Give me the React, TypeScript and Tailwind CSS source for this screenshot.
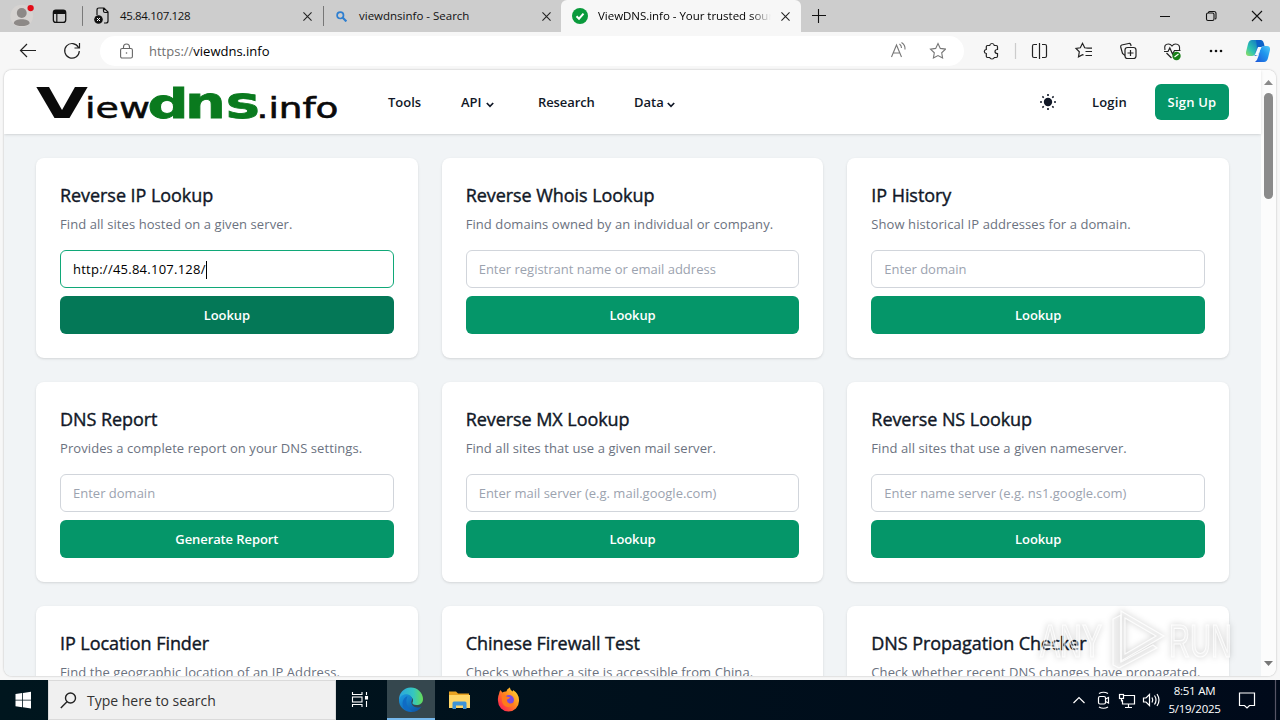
import React from "react";

type CardProps = {
  title: string;
  desc: string;
  placeholder?: string;
  value?: string;
  button?: string;
};

const cards: CardProps[] = [
  { title: "Reverse IP Lookup", desc: "Find all sites hosted on a given server.", value: "http://45.84.107.128/", button: "Lookup" },
  { title: "Reverse Whois Lookup", desc: "Find domains owned by an individual or company.", placeholder: "Enter registrant name or email address", button: "Lookup" },
  { title: "IP History", desc: "Show historical IP addresses for a domain.", placeholder: "Enter domain", button: "Lookup" },
  { title: "DNS Report", desc: "Provides a complete report on your DNS settings.", placeholder: "Enter domain", button: "Generate Report" },
  { title: "Reverse MX Lookup", desc: "Find all sites that use a given mail server.", placeholder: "Enter mail server (e.g. mail.google.com)", button: "Lookup" },
  { title: "Reverse NS Lookup", desc: "Find all sites that use a given nameserver.", placeholder: "Enter name server (e.g. ns1.google.com)", button: "Lookup" },
  { title: "IP Location Finder", desc: "Find the geographic location of an IP Address." },
  { title: "Chinese Firewall Test", desc: "Checks whether a site is accessible from China." },
  { title: "DNS Propagation Checker", desc: "Check whether recent DNS changes have propagated." },
];

function Card({ title, desc, placeholder, value, button }: CardProps) {
  const active = value !== undefined;
  return (
    <section className="h-[200px] rounded-lg bg-white px-6 pt-[23px] pb-6 shadow-sm">
      <h2 className="whitespace-nowrap text-[18px] leading-7 tracking-[-0.06px] text-[#111827] [-webkit-text-stroke:0.4px_#111827]">{title}</h2>
      <p className="mt-[5px] whitespace-nowrap text-[13px] leading-5 tracking-[0.08px] text-[#6b7280]">{desc}</p>
      {button && (
        <>
          <div
            className={
              active
                ? "mt-4 flex h-[38px] items-center rounded-md border border-[#10a878] px-3 pt-[2px] text-[13px] tracking-[0.25px] text-black"
                : "mt-4 flex h-[38px] items-center rounded-md border border-[#d1d5db] px-3 pt-[2px] text-[13px] text-[#9ca3af]"
            }
          >
            {active ? value : placeholder}
            {active && <span className="h-[18px] w-px bg-black" />}
          </div>
          <button
            className={
              active
                ? "mt-2 flex h-[38px] w-full items-center justify-center rounded-md bg-[#047857] pt-[2px] text-[13px] font-semibold tracking-[-0.1px] text-white"
                : "mt-2 flex h-[38px] w-full items-center justify-center rounded-md bg-[#059669] pt-[2px] text-[13px] font-semibold tracking-[-0.1px] text-white"
            }
          >
            {button}
          </button>
        </>
      )}
    </section>
  );
}

function CloseX({ size = 9 }: { size?: number }) {
  return (
    <svg width={size} height={size} viewBox="0 0 10 10" stroke="#222" strokeWidth="1.2" fill="none">
      <path d="M.5.5l9 9M9.5.5l-9 9" />
    </svg>
  );
}

function TabBar() {
  return (
    <div className="flex h-8 shrink-0 items-stretch bg-[#cdcdcd] text-[11.5px] text-[#111]">
      <div className="flex w-[84px] items-center border-r border-transparent">
        <svg width="84" height="32" viewBox="0 0 84 32">
          <circle cx="22" cy="16" r="11.5" fill="#d6d3d1" />
          <circle cx="22" cy="13" r="5" fill="#8d8987" />
          <path d="M14 23.500c0-5.500 16-5.500 16 0-3 3.500-13 3.500-16 0z" fill="#8d8987" />
          <circle cx="31" cy="8" r="3.2" fill="#e30b17" />
          <rect x="54" y="10" width="12.5" height="12.5" rx="2.5" fill="none" stroke="#111" strokeWidth="1.3" />
          <path d="M54 14v-1.500q0-2.500 2.500-2.500h7.500q2.500 0 2.500 2.500V14z" fill="#111" />
          <path d="M57.500 13v9" stroke="#111" strokeWidth="1.200" />
          <path d="M83.500 6v20" stroke="#777" />
        </svg>
      </div>
      <div className="flex w-[239px] items-center pl-[10px] pr-[11px]">
        <svg width="16" height="18" viewBox="0 0 16 18" fill="none" stroke="#111" strokeWidth="1.2">
          <path d="M3 8V3q0-2 2-2h5l4 4v9q0 2-2 2h-2M9.500 1v3q0 1.500 1.500 1.500h3" />
          <circle cx="4.500" cy="12.500" r="4.300" fill="#111" stroke="none" />
          <path d="M3 11l3 3M6 11l-3 3" stroke="#fff" strokeWidth="1" />
        </svg>
        <span className="ml-[10px] flex-1 tracking-[-0.35px]">45.84.107.128</span>
        <CloseX />
      </div>
      <div className="flex w-[238px] items-center pr-[10px]">
        <span className="h-5 w-px bg-[#777]" />
        <svg className="ml-[12px]" width="11" height="11" viewBox="0 0 11 11" fill="none" stroke="#2f7fd0">
          <circle cx="4.300" cy="4.300" r="3.200" strokeWidth="1.700" />
          <path d="M6.800 6.800l3.600 3.600" strokeWidth="2.200" />
        </svg>
        <span className="ml-[12px] flex-1">viewdnsinfo - Search</span>
        <CloseX />
      </div>
      <div className="flex w-[240px] items-center rounded-t-md bg-[#f7f7f7] pl-[11px] pr-[11px]">
        <svg width="16" height="16" viewBox="0 0 16 16">
          <circle cx="8" cy="8" r="8" fill="#0a9a3c" />
          <path d="M4.500 8.300l2.500 2.400 4.500-5" fill="none" stroke="#fff" strokeWidth="2" />
        </svg>
        <span className="ml-[10px] w-[173px] overflow-hidden whitespace-nowrap bg-gradient-to-r from-black from-88% to-transparent bg-clip-text tracking-[-0.03px] text-transparent">
          ViewDNS.info - Your trusted source
        </span>
        <span className="ml-auto">
          <CloseX />
        </span>
      </div>
      <svg width="479" height="32" viewBox="801 0 479 32" fill="none" stroke="#111" strokeWidth="1.100">
        <path d="M812 15.500h14M818.500 9v14M1160 16.500h10" />
        <rect x="1206.500" y="13" width="7.500" height="7.500" rx="1.500" />
        <path d="M1208.500 13v-.5q0-1 1-1h4.500q2 0 2 2v4.500q0 1-1 1" />
        <path d="M1252 11l10 10M1262 11l-10 10" />
      </svg>
    </div>
  );
}

function Toolbar() {
  return (
    <div className="flex h-[38px] shrink-0 items-center bg-[#f7f7f7]">
      <svg width="100" height="38" viewBox="0 32 100 38" fill="none" stroke="#222" strokeWidth="1.200">
        <path d="M36 50.500H20.500M27 44l-6.500 6.500L27 57" />
        <path d="M78.500 47.500A7.300 7.300 0 1 0 79.300 51M79.500 43v5h-5" />
      </svg>
      <div className="flex h-[30px] w-[864px] items-center rounded-full bg-white pl-[20px] pr-[18px]">
        <svg width="13" height="16" viewBox="0 0 13 16" fill="none" stroke="#666" strokeWidth="1.100">
          <rect x=".6" y="5.500" width="11.800" height="9.500" rx="1.500" />
          <path d="M3.500 5.500V4a3 3 0 0 1 6 0v1.500" />
          <circle cx="6.500" cy="10" r=".8" fill="#666" stroke="none" />
        </svg>
        <span className="ml-[16px] flex-1 pt-px text-[13px] text-[#707070]">
          https://<span className="text-black">viewdns.info</span>
        </span>
        <svg width="56" height="20" viewBox="890 41 56 20" fill="none" stroke="#777" strokeWidth="1.100">
          <path d="M891.500 57l5-12 5 12M893 53h7M899.500 44q2 1.500 2 4M901.500 42.500q4 2.500 3.500 7" />
          <path d="M938 43.500l2.300 4.900 5.200.7-3.800 3.700.9 5.300-4.600-2.500-4.600 2.500.9-5.300-3.800-3.700 5.200-.7z" />
        </svg>
      </div>
      <svg width="316" height="38" viewBox="964 32 316 38" fill="none" stroke="#222" strokeWidth="1.200">
        <defs>
          <linearGradient id="cpA" x1="0" y1="1" x2="1" y2="0">
            <stop offset="0" stopColor="#9be05a" />
            <stop offset=".35" stopColor="#2fc6b0" />
            <stop offset="1" stopColor="#0a63c9" />
          </linearGradient>
          <linearGradient id="cpB" x1="0" y1="1" x2="1" y2="0">
            <stop offset="0" stopColor="#1d55d8" />
            <stop offset=".6" stopColor="#2098ee" />
            <stop offset="1" stopColor="#55ccf8" />
          </linearGradient>
        </defs>
        <path d="M987.500 45.500h2.200q.3-2 2.300-2t2.300 2h2q1.200 0 1.200 1.200v2.800q-2.500 0-2.500 2t2.500 2v2.800q0 1.200-1.200 1.200h-2q-.3 1.500-2.300 1.500t-2.300-1.500h-2.200q-1.200 0-1.200-1.200v-2.800q-2-.2-2-2t2-2v-2.800q0-1.200 1.200-1.200z" />
        <path d="M1015.500 43v16" stroke="#ccc" />
        <path d="M1037 44.500h-3q-1.500 0-1.500 1.500v10q0 1.500 1.500 1.500h3M1042 44.500h3q1.500 0 1.500 1.500v10q0 1.500-1.500 1.500h-3M1039.500 43v16" />
        <path d="M1088 48.200l-3.300-.4-2.200-4.500-2.200 4.500-4.300.7 3.300 3.300-.8 5 4-2.200 1 .5M1085.500 51.500h6.500M1085.500 55.500h6.500M1087 48.200h5" />
        <path d="M1125 55.500l-2.500-2-1.800-6.500q-.3-1.500 1-2l7-1.500q1.500-.3 2 1l.4 1.500" />
        <rect x="1125" y="47.500" width="11" height="11" rx="2.500" />
        <path d="M1130.500 50v6M1127.500 53h6" />
        <path d="M1165 50q-1.500-6 3.500-6 2 0 3.500 2 1.500-2 3.500-2 5 0 4 6M1166.500 53l5 5M1164 51.500h4l1.800-3.500 2.700 6 2-3.500h6" />
        <circle cx="1176.500" cy="56" r="4.200" fill="#178017" stroke="none" />
        <path d="M1174.500 57l4-3" stroke="#fff" />
        <g fill="#111" stroke="none">
          <circle cx="1211" cy="51" r="1.300" />
          <circle cx="1216" cy="51" r="1.300" />
          <circle cx="1221" cy="51" r="1.300" />
        </g>
        <path d="M1252 40h9q-2.500 2-3.500 6l-1.800 7q-1 3-3.700 3h-3q-3.500 0-3-4l2-8q1-4 4-4z" fill="url(#cpA)" stroke="none" />
        <path d="M1264 62h-9q2.500-2 3.500-6l1.800-7q1-3 3.700-3h3q3.500 0 3 4l-2 8q-1 4-4 4z" fill="url(#cpB)" stroke="none" />
        <path d="M1256 40h5q2.500 0 3.500 6-4 0-5 4l-1.500 5-3.500 1 2.500-9z" fill="#0c62c8" stroke="none" />
        <path d="M1258 47h3.500l-3.500 8h-3.200z" fill="#f4fbff" stroke="none" />
      </svg>
    </div>
  );
}

function Logo() {
  return (
    <svg className="overflow-visible" width="302" height="36" viewBox="36 84 302 36" fontFamily="DejaVu Sans" fontWeight="400">
      <text x="36" y="118" fontSize="42" fontWeight="700" textLength="52" lengthAdjust="spacingAndGlyphs" fill="#0a0a0a">V</text>
      <text x="85" y="118" fontSize="29" textLength="65" lengthAdjust="spacingAndGlyphs" fill="#0a0a0a" stroke="#0a0a0a" strokeWidth=".5">iew</text>
      <text x="147.500" y="117.500" fontSize="41" fontWeight="700" textLength="41" lengthAdjust="spacingAndGlyphs" fill="#0a7a1e" stroke="#0a7a1e" strokeWidth=".8">d</text>
      <text x="185" y="117.500" fontSize="45" fontWeight="700" textLength="75" lengthAdjust="spacingAndGlyphs" fill="#0a7a1e" stroke="#0a7a1e" strokeWidth=".8">ns</text>
      <text x="256.500" y="118" fontSize="28" textLength="82" lengthAdjust="spacingAndGlyphs" fill="#0a0a0a" stroke="#0a0a0a" strokeWidth=".6">.info</text>
    </svg>
  );
}

function Chevron() {
  return (
    <svg className="mt-[3px]" width="8" height="6" viewBox="0 0 8 6" fill="none" stroke="#111827" strokeWidth="1.700">
      <path d="M.8 1l3.200 3.300L7.200 1" />
    </svg>
  );
}

function SiteHeader() {
  return (
    <header className="relative flex h-16 shrink-0 items-center bg-white px-8 text-[13px] font-semibold text-[#111827] shadow">
      <Logo />
      <nav className="ml-[50px] flex items-center pt-[2px]">
        <span className="w-[73px]">Tools</span>
        <span className="flex w-[77px] items-center gap-1">API <Chevron /></span>
        <span className="w-[96px] tracking-[-0.1px]">Research</span>
        <span className="flex items-center gap-[3px]">Data <Chevron /></span>
      </nav>
      <div className="ml-auto flex items-center">
        <svg width="18" height="18" viewBox="-9 -9 18 18" fill="#111827">
          <circle r="4.200" />
          <path d="M0-8v2M0 6v2M-8 0h2M6 0h2M-5.600-5.600l1.300 1.300M4.300 4.300l1.300 1.300M5.600-5.600L4.300-4.300M-5.600 5.600l1.300-1.300" stroke="#111827" strokeWidth="1.600" />
        </svg>
        <span className="ml-[35px] w-[63px] pt-[2px] tracking-[0.15px]">Login</span>
        <button className="h-9 w-[74px] rounded-md bg-[#059669] pt-[2px] font-semibold tracking-[0.2px] text-white">Sign Up</button>
      </div>
    </header>
  );
}

function Watermark() {
  return (
    <svg className="absolute left-[1030px] top-[602px] overflow-visible drop-shadow-[0_0_3px_rgba(0,0,0,0.3)]" width="212" height="80" viewBox="1030 602 212 80" fill="rgba(255,255,255,0.3)" stroke="rgba(255,255,255,0.85)" strokeWidth="1.200">
      <text x="1040" y="657" fontFamily="Liberation Sans" fontSize="46" textLength="62" lengthAdjust="spacingAndGlyphs">ANY</text>
      <path d="M1121 611l43 25-43 25zM1125 618v36l31-18z" fillRule="evenodd" />
      <path d="M1121 615l-8 4v46l6 3 38-20-4-3-32 17v-47z" />
      <text x="1169" y="657" fontFamily="Liberation Sans" fontSize="46" textLength="63" lengthAdjust="spacingAndGlyphs">RUN</text>
    </svg>
  );
}

function Taskbar() {
  return (
    <footer className="flex h-10 shrink-0 items-stretch bg-gradient-to-r from-[#00161e] to-[#000a1a] text-white">
      <svg width="48" height="40" viewBox="0 0 48 40" fill="#fff">
        <path d="M15.500 14l6.700-1v6.700h-6.700zM23 12.900l8-1.200v8h-8zM15.500 20.500h6.700v6.700l-6.700-1zM23 20.500h8v8l-8-1.200z" />
      </svg>
      <div className="flex w-[288px] items-center border border-[#dadada] bg-[#f0f0f0] pl-[11px]">
        <svg width="17" height="17" viewBox="0 0 17 17" fill="none" stroke="#222" strokeWidth="1.400">
          <circle cx="10.500" cy="6" r="5" />
          <path d="M7 9.700L.8 16" />
        </svg>
        <span className="ml-[10px] pt-px text-[14px] text-[#333]">Type here to search</span>
      </div>
      <svg width="196" height="40" viewBox="336 680 196 40">
        <defs>
          <linearGradient id="edA" x1="0" y1="0" x2="1" y2="0">
            <stop offset="0" stopColor="#2aa5e0" />
            <stop offset=".6" stopColor="#35c6c0" />
            <stop offset="1" stopColor="#66dc56" />
          </linearGradient>
          <linearGradient id="edB" x1="0" y1="0" x2="1" y2="1">
            <stop offset="0" stopColor="#1b9de2" />
            <stop offset="1" stopColor="#0c4da0" />
          </linearGradient>
          <linearGradient id="ffA" x1="1" y1="0" x2="0" y2="1">
            <stop offset="0" stopColor="#ffe83a" />
            <stop offset=".45" stopColor="#ff8a1e" />
            <stop offset=".8" stopColor="#ff3647" />
            <stop offset="1" stopColor="#e31587" />
          </linearGradient>
        </defs>
        <g fill="none" stroke="#fff" strokeWidth="1.100">
          <path d="M352.500 692v2.500h9.500V692M352.500 707v-2.500h9.500v2.500M366.500 692v3M366.500 701v6" />
          <rect x="352.500" y="697" width="9.500" height="5" />
          <rect x="365.500" y="696.500" width="2" height="2.500" fill="#fff" />
        </g>
        <rect x="387" y="680" width="48" height="40" fill="#35474e" />
        <rect x="387" y="718" width="48" height="2" fill="#76b9ed" />
        <path d="M399 700a12 12 0 0 1 24-1c0 4-3 6-6.500 6-3 0-4.500-1.200-4-2.500 1.600-2.500 0-6-4-6-4.500 0-8 1-9.500 3.500z" fill="url(#edA)" />
        <path d="M399 700c.5-4 5-6.500 9-5.500 3.500 1 4.500 4 4 5.500-2 3 1 7.500 5.500 7.500 2 0 3-.6 4-1-2.500 4-6.500 5.800-10.500 5.500-6.700-.3-12.300-5.500-12-12z" fill="url(#edB)" />
        <path d="M407.500 696q-4 8 4.500 16-10-1-9.500-9 .5-5 5-7z" fill="#0f6bc4" />
        <path d="M449 691.500h7l2 2h11v14h-20z" fill="#e8a221" />
        <path d="M449 695h21v13h-21z" fill="#ffd667" />
        <path d="M452.500 709v-6q0-1.500 1.500-1.500h11q1.500 0 1.500 1.500v6H463v-3.500h-7v3.500z" fill="#3e93d6" />
        <path d="M499 694q.3-2.500 1.500-4l1.800 2.500q2-1.200 4-1 .5-2.500 3.500-4 .3 2.500 3 4l.2-1.500q6.500 4 6 11a10.500 10.500 0 0 1-21 0q-.5-4 1-7z" fill="url(#ffA)" />
        <circle cx="509" cy="700" r="5" fill="#7a4be0" />
        <path d="M501.500 694q3 .5 5 2.500 2 .5 3.500.5-.5 2-3 2.500-.5 3 2.500 4 3.500.5 4.500-2.500 0 6.500-6.500 6-5-.8-5.500-6z" fill="#ff7a1c" />
      </svg>
      <div className="ml-auto flex items-center">
        <svg width="98" height="40" viewBox="1066 680 98 40" fill="none" stroke="#fff" strokeWidth="1.200">
          <path d="M1073.500 703l5.500-5.500 5.500 5.500" />
          <rect x="1098.500" y="696.500" width="7" height="7.500" rx="1.500" />
          <path d="M1105.500 699l3-1.500v5.500l-3-1.500M1099 693.500q4.500-2.500 9 0M1099 707q4.500 2.500 9 0" />
          <path d="M1124 695.500h10.500v8.500h-12v-4M1128.500 704v3M1125 707.500h7" />
          <rect x="1119.500" y="694.500" width="4" height="4" />
          <path d="M1121.500 698.500v3" />
          <path d="M1143.500 698h2.500l3.500-3.500v11l-3.500-3.500h-2.500zM1152 697.500q1.500 2.500 0 5M1154.500 695.500q3 4.500 0 9M1157 694q4 6 0 12" />
        </svg>
        <div className="w-[61px] text-center text-[11.5px] leading-[18px] tracking-[-0.25px]">
          <div>8:51 AM</div>
          <div>5/19/2025</div>
        </div>
        <svg width="55" height="40" viewBox="1225 680 55 40" fill="none" stroke="#fff" strokeWidth="1.200">
          <path d="M1239.500 693h15v12.500h-5l-2.500 2.500-2.500-2.500h-5z" />
          <path d="M1275.500 680v40" stroke="#556" />
        </svg>
      </div>
    </footer>
  );
}

export default function App() {
  return (
    <div className="relative flex h-[720px] w-[1280px] flex-col overflow-hidden bg-[#f7f7f7] font-['Open_Sans',sans-serif]">
      <TabBar />
      <Toolbar />
      <div className="mx-1 mb-1 flex min-h-0 flex-1 overflow-hidden rounded-lg bg-white shadow-[0_0_2px_rgba(0,0,0,0.3)]">
        <div className="flex w-[1257px] flex-col bg-[#f1f4f6]">
          <SiteHeader />
          <main className="grid grid-cols-3 gap-6 px-8 py-6">
            {cards.map((c) => (
              <Card key={c.title} {...c} />
            ))}
          </main>
        </div>
        <div className="flex w-[15px] flex-col items-center bg-[#fcfcfc] py-[10px]">
          <svg width="9" height="5" viewBox="0 0 9 5" fill="#8a8a8a"><path d="M0 5L4.500 0 9 5z" /></svg>
          <span className="mt-2 h-[106px] w-[9px] rounded-full bg-[#8b8b8b]" />
          <svg className="mt-auto" width="9" height="5" viewBox="0 0 9 5" fill="#777"><path d="M0 0l4.500 5L9 0z" /></svg>
        </div>
      </div>
      <Taskbar />
      <Watermark />
    </div>
  );
}
